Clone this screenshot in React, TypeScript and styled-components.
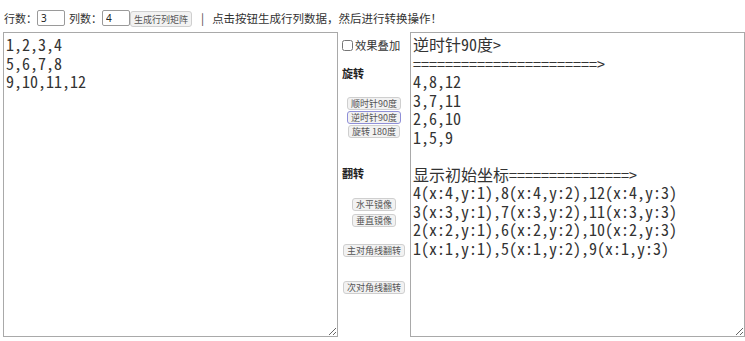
import React from 'react';
import styled, { createGlobalStyle } from 'styled-components';

const GlobalStyle = createGlobalStyle`
  html, body { margin: 0; padding: 0; background: #ffffff; }
  body { font-family: "Noto Sans CJK SC", "Noto Sans", sans-serif; color: #222; }
`;

const Page = styled.div`
  width: 745px;
  height: 341px;
  box-sizing: border-box;
  padding-left: 3px;
  overflow: hidden;
`;

const TopBar = styled.div`
  display: flex;
  align-items: center;
  padding-top: 4px;
  padding-left: 1px;
  box-sizing: border-box;
  height: 32px;
`;

const Label = styled.span`
  font-size: 11px;
  line-height: 16px;
  color: #333;
`;

const NumInput = styled.input<{ $mr: number }>`
  box-sizing: border-box;
  width: 28px;
  height: 16px;
  margin: 0 ${(p) => p.$mr}px 0 0;
  padding: 0 3px;
  border: 1px solid #9a9a9a;
  border-radius: 2px;
  font-family: "Noto Sans", sans-serif;
  font-size: 10px;
  color: #222;
  outline: none;
`;

const Button = styled.button<{ $focused?: boolean }>`
  box-sizing: border-box;
  height: 13px;
  padding: 0 3px;
  border: 1px solid ${(p) => (p.$focused ? '#8f8fd8' : '#cfcfcf')};
  border-radius: 3px;
  background: #f2f2f2;
  color: #555;
  font-family: "Noto Sans CJK SC", sans-serif;
  font-size: 9px;
  line-height: 11px;
  white-space: nowrap;
  cursor: pointer;
`;

const TopButton = styled(Button)`
  height: 16px;
  margin-top: 2px;
`;

const Separator = styled.span`
  font-size: 11.5px;
  color: #444;
  margin: 0 8px 0 9px;
`;

const Hint = styled.span`
  font-size: 11.5px;
  color: #333;
  white-space: nowrap;
`;

const Main = styled.div`
  display: grid;
  grid-template-columns: 335px 72px 335px;
  height: 305px;
`;

const Area = styled.textarea`
  box-sizing: border-box;
  width: 335px;
  height: 305px;
  margin: 0;
  padding: 2px;
  border: 1px solid #a9a9a9;
  border-radius: 0;
  font-family: "Noto Sans Mono CJK SC", "Liberation Serif", "Noto Sans CJK SC", serif;
  font-size: 16px;
  line-height: 18.5px;
  color: #333;
  outline: none;
  resize: both;
  overflow: hidden;
`;

const Side = styled.div`
  display: flex;
  flex-direction: column;
  align-items: center;
`;

const CheckRow = styled.label`
  align-self: flex-start;
  display: flex;
  align-items: center;
  height: 26px;
  padding-left: 4px;
  font-size: 11.3px;
  color: #333;
`;

const Check = styled.input`
  width: 11px;
  height: 11px;
  margin: 0 2px 0 0;
`;

const Heading = styled.div<{ $mt: number }>`
  align-self: flex-start;
  margin-top: ${(p) => p.$mt}px;
  padding-left: 4px;
  font-size: 11px;
  line-height: 16px;
  font-weight: 700;
  color: #222;
`;

const SideButton = styled(Button)<{ $mt: number }>`
  margin-top: ${(p) => p.$mt}px;
`;

export default function App() {
  const left = '1,2,3,4\n5,6,7,8\n9,10,11,12';
  const right =
    '逆时针90度>\n' +
    '=======================>\n' +
    '4,8,12\n3,7,11\n2,6,10\n1,5,9\n\n' +
    '显示初始坐标===============>\n' +
    '4(x:4,y:1),8(x:4,y:2),12(x:4,y:3)\n' +
    '3(x:3,y:1),7(x:3,y:2),11(x:3,y:3)\n' +
    '2(x:2,y:1),6(x:2,y:2),10(x:2,y:3)\n' +
    '1(x:1,y:1),5(x:1,y:2),9(x:1,y:3)';
  return (
    <Page>
      <GlobalStyle />
      <TopBar>
        <Label>行数：</Label>
        <NumInput defaultValue="3" $mr={4} />
        <Label>列数：</Label>
        <NumInput defaultValue="4" $mr={0} />
        <TopButton>生成行列矩阵</TopButton>
        <Separator>|</Separator>
        <Hint>点击按钮生成行列数据，然后进行转换操作！</Hint>
      </TopBar>
      <Main>
        <Area defaultValue={left} spellCheck={false} />
        <Side>
          <CheckRow>
            <Check type="checkbox" />
            效果叠加
          </CheckRow>
          <Heading $mt={7}>旋转</Heading>
          <SideButton $mt={16} $focused={false}>顺时针90度</SideButton>
          <SideButton $mt={1} $focused={true}>逆时针90度</SideButton>
          <SideButton $mt={1} $focused={false}>旋转 180度</SideButton>
          <Heading $mt={27}>翻转</Heading>
          <SideButton $mt={17} $focused={false}>水平镜像</SideButton>
          <SideButton $mt={3} $focused={false}>垂直镜像</SideButton>
          <SideButton $mt={17} $focused={false}>主对角线翻转</SideButton>
          <SideButton $mt={24} $focused={false}>次对角线翻转</SideButton>
        </Side>
        <Area defaultValue={right} spellCheck={false} />
      </Main>
    </Page>
  );
}
